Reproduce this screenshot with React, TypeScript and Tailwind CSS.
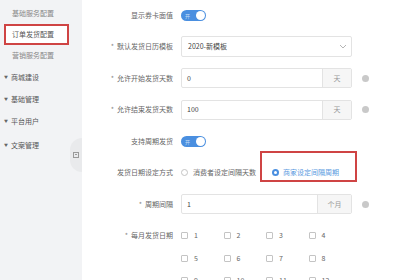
import type { ReactNode } from "react";

const font = { fontFamily: '"Noto Sans CJK SC", "Noto Sans", sans-serif' };

function Toggle() {
  return (
    <span className="relative flex h-[11px] w-[25px] items-center rounded-full bg-[#4a8fe0]">
      <span className="ml-[4px] text-[5px] leading-none text-white/70">开</span>
      <span className="absolute right-[1px] top-[1px] h-[9px] w-[9px] rounded-full bg-white" />
    </span>
  );
}

function Info() {
  return <span className="ml-[10px] h-[7px] w-[7px] rounded-full bg-[#c9c9c9]" />;
}

function Row({ label, required, children }: { label: string; required?: boolean; children: ReactNode }) {
  return (
    <div className="flex h-[31.5px] items-center">
      <div className="w-[91px] shrink-0 pr-[0px] text-right text-[7px] text-[#666]">
        {required && <span className="mr-[3px] text-[#888]">*</span>}
        {label}
      </div>
      <div className="ml-[8px] flex items-center">{children}</div>
    </div>
  );
}

function AddonInput({ value, unit, unitW }: { value: string; unit: string; unitW: string }) {
  return (
    <div className="flex h-[20px] w-[171px] items-stretch rounded-[2px] border border-[#e3e3e3]">
      <span className="flex flex-1 items-center pl-[5px] text-[7px] text-[#444]">{value}</span>
      <span className={`flex ${unitW} items-center justify-center border-l border-[#e3e3e3] bg-[#f6f6f6] text-[7px] text-[#999]`}>
        {unit}
      </span>
    </div>
  );
}

const days = ["1", "2", "3", "4", "5", "6", "7", "8", "9", "10", "11", "12"];

export default function App() {
  const sub = ["基础服务配置", "订单发货配置", "营销服务配置"];
  const groups = ["商城建设", "基础管理", "平台用户", "文案管理"];
  return (
    <div className="flex h-[280px] w-[420px] overflow-hidden bg-white" style={font}>
      <aside className="relative w-[82px] shrink-0 bg-[#f2f3f5] pt-[3px]">
        {sub.map((s, i) => (
          <div key={s} className="relative flex h-[21px] items-center pl-[12px] text-[7px] text-[#888]">
            {i === 1 && (
              <span className="absolute left-[4px] top-[0px] h-[21px] w-[65px] border-2 border-[#cf4444] bg-white" />
            )}
            <span className={`relative ${i === 1 ? "text-[#555]" : ""}`}>{s}</span>
          </div>
        ))}
        {groups.map((g, i) => (
          <div
            key={g}
            className={`flex items-center pl-[4px] text-[7px] text-[#555] ${i === 3 ? "h-[24px] pt-[2px]" : "h-[22px]"}`}
          >
            <span className="mr-[3px] text-[4px] text-[#666]">▼</span>
            {g}
          </div>
        ))}
        <div className="absolute right-0 top-[138px] flex h-[34px] w-[12px] items-center justify-center rounded-l-full bg-[#e9eaec]">
          <span className="flex h-[6px] w-[6px] flex-col justify-between border border-[#999] p-[1px]">
            <span className="h-px bg-[#999]" />
          </span>
        </div>
      </aside>

      <main className="flex-1 pt-[0px]">
        <div className="mt-[-0.75px]">
          <Row label="显示券卡面值">
            <Toggle />
          </Row>
          <Row label="默认发货日历模板" required>
            <div className="flex h-[21px] w-[171px] items-center justify-between rounded-[2px] border border-[#e3e3e3] pl-[6px] pr-[4px] text-[7px] text-[#444]">
              <span>2020-新模板</span>
              <svg width="8" height="5" viewBox="0 0 8 5" fill="none">
                <path d="M1 1l3 3 3-3" stroke="#b5b5b5" strokeWidth="1" />
              </svg>
            </div>
          </Row>
          <Row label="允许开始发货天数" required>
            <AddonInput value="0" unit="天" unitW="w-[29px]" />
            <Info />
          </Row>
          <Row label="允许结束发货天数" required>
            <AddonInput value="100" unit="天" unitW="w-[29px]" />
            <Info />
          </Row>
          <Row label="支持周期发货">
            <Toggle />
          </Row>
          <Row label="发货日期设定方式">
            <div className="flex items-center text-[7px]">
              <span className="h-[7px] w-[7px] rounded-full border border-[#c4c4c4] bg-white" />
              <span className="ml-[5px] text-[#666]">消费者设定间隔天数</span>
              <span className="relative ml-[16px] flex items-center">
                <span className="absolute left-[-12px] right-[-18px] top-[-16px] bottom-[-4px] border-2 border-[#cf4444]" />
                <span className="flex h-[7px] w-[7px] items-center justify-center rounded-full bg-[#4a8fe0]">
                  <span className="h-[3px] w-[3px] rounded-full bg-white" />
                </span>
                <span className="ml-[4px] text-[#5a9ae0]">商家设定间隔周期</span>
              </span>
            </div>
          </Row>
          <Row label="周期间隔" required>
            <AddonInput value="1" unit="个月" unitW="w-[34px]" />
            <Info />
          </Row>
          <div className="flex">
            <div className="flex h-[31.5px] w-[91px] shrink-0 items-center justify-end text-[7px] text-[#666]">
              <span className="mr-[3px] text-[#888]">*</span>每月发货日期
            </div>
            <div className="ml-[8px] grid grid-cols-[42.5px_42.5px_42.5px_42.5px] pt-[4.5px]">
              {days.map((d) => (
                <div key={d} className="flex h-[22.5px] items-center text-[7px] text-[#666]">
                  <span className="h-[7px] w-[7px] rounded-[1px] border border-[#c4c4c4] bg-white" />
                  <span className="ml-[6px]">{d}</span>
                </div>
              ))}
            </div>
          </div>
        </div>
      </main>
    </div>
  );
}
